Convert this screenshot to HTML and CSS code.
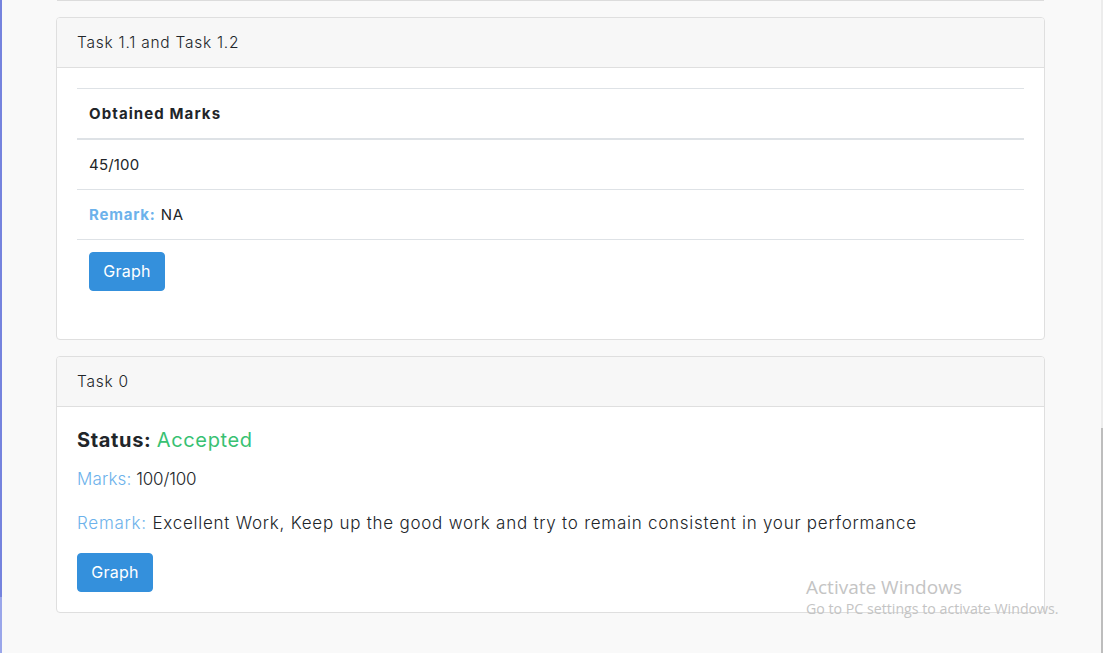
FILE: index.html
```html
<!DOCTYPE html>
<html lang="en">
<head>
<meta charset="utf-8">
<title>Tasks</title>
<link rel="stylesheet" href="styles.css">
</head>
<body>
<div class="side-edge"></div>
<main class="page">
  <div class="prev-edge"></div>

  <section class="card">
    <div class="card-header">Task 1.1 and Task 1.2</div>
    <div class="card-body">
      <table class="table">
        <thead>
          <tr><th>Obtained Marks</th></tr>
        </thead>
        <tbody>
          <tr><td class="num">45/100</td></tr>
          <tr><td><span class="info bold">Remark:</span> NA</td></tr>
          <tr><td><button class="btn">Graph</button></td></tr>
        </tbody>
      </table>
    </div>
  </section>

  <section class="card">
    <div class="card-header">Task 0</div>
    <div class="card-body">
      <h4 class="status">Status: <span class="ok">Accepted</span></h4>
      <p class="line"><span class="info">Marks:</span> <span class="digits">100/100</span></p>
      <p class="line wide"><span class="info">Remark:</span> Excellent Work, Keep up the good work and try to remain consistent in your performance</p>
      <button class="btn">Graph</button>
    </div>
  </section>
</main>

<div class="watermark">
  <div class="wm-title">Activate Windows</div>
  <div class="wm-sub">Go to PC settings to activate Windows.</div>
</div>
<div class="scroll-edge"></div>
</body>
</html>
```

FILE: styles.css
```css
* { box-sizing: border-box; }

html, body {
  margin: 0;
  height: 100%;
}

body {
  background: #f9f9f9;
  font-family: "Inter", "Noto Sans", sans-serif;
  color: #212529;
  overflow: hidden;
  position: relative;
}

.side-edge {
  position: absolute;
  left: 0;
  top: 0;
  width: 2px;
  height: 100%;
  background: linear-gradient(#7583de 0, #7583de 597px, #9aa6ea 597px);
}

.scroll-edge {
  position: absolute;
  right: 0;
  top: 0;
  width: 2px;
  height: 100%;
  background: linear-gradient(#ececec 0, #ececec 428px, #bdbdbd 428px);
}

.page {
  padding: 0 58px 0 56px;
}

.prev-edge {
  height: 1px;
  margin: 0 1px 16px;
  background: #dcdcdc;
}

.card {
  background: #fff;
  border: 1px solid #dfdfdf;
  border-radius: 4px;
  margin-bottom: 16px;
}

.card-header {
  background: #f7f7f7;
  border-bottom: 1px solid #dfdfdf;
  border-radius: 3px 3px 0 0;
  padding: 12px 20px;
  font-size: 15.5px;
  line-height: 25px;
  font-weight: 300;
  letter-spacing: 0.75px;
}

.card-body {
  padding: 20px;
}

.table {
  width: 100%;
  border-collapse: collapse;
  margin-bottom: 16px;
  font-size: 15px;
  line-height: 25px;
}

.table th,
.table td {
  text-align: left;
  padding: 12px;
  border-top: 1px solid #dee2e6;
}

.table th {
  font-weight: 700;
  border-bottom: 2px solid #dee2e6;
  letter-spacing: 1.1px;
}

.table td {
  font-weight: 400;
  letter-spacing: 0.8px;
}

.table td.num {
  letter-spacing: 0.2px;
}

.info { color: #6cb2eb; }
.bold { font-weight: 700; }
.ok { color: #38c172; font-weight: 400; }

.status {
  margin: 0 0 12px;
  font-size: 20px;
  line-height: 26px;
  font-weight: 700;
  letter-spacing: 0.65px;
}

.line {
  margin: 0 0 16px;
  font-size: 17px;
  line-height: 28px;
  font-weight: 300;
  letter-spacing: 0.15px;
}

.line .digits {
  letter-spacing: -0.2px;
}

.line.wide {
  letter-spacing: 0.75px;
}

.btn {
  display: inline-block;
  min-width: 76px;
  background: #3490dc;
  color: #fff;
  border: 1px solid #3490dc;
  border-radius: 4px;
  padding: 6px 12px;
  font-family: inherit;
  font-size: 16px;
  line-height: 25px;
  font-weight: 400;
  letter-spacing: 0.3px;
  cursor: pointer;
}

.watermark {
  position: absolute;
  left: 806px;
  top: 576px;
  font-family: "Open Sans", "Noto Sans", sans-serif;
  color: #c4c4c4;
  pointer-events: none;
}

.wm-title {
  font-size: 19px;
  line-height: 23px;
}

.wm-sub {
  font-size: 14.2px;
  line-height: 19px;
}
```
